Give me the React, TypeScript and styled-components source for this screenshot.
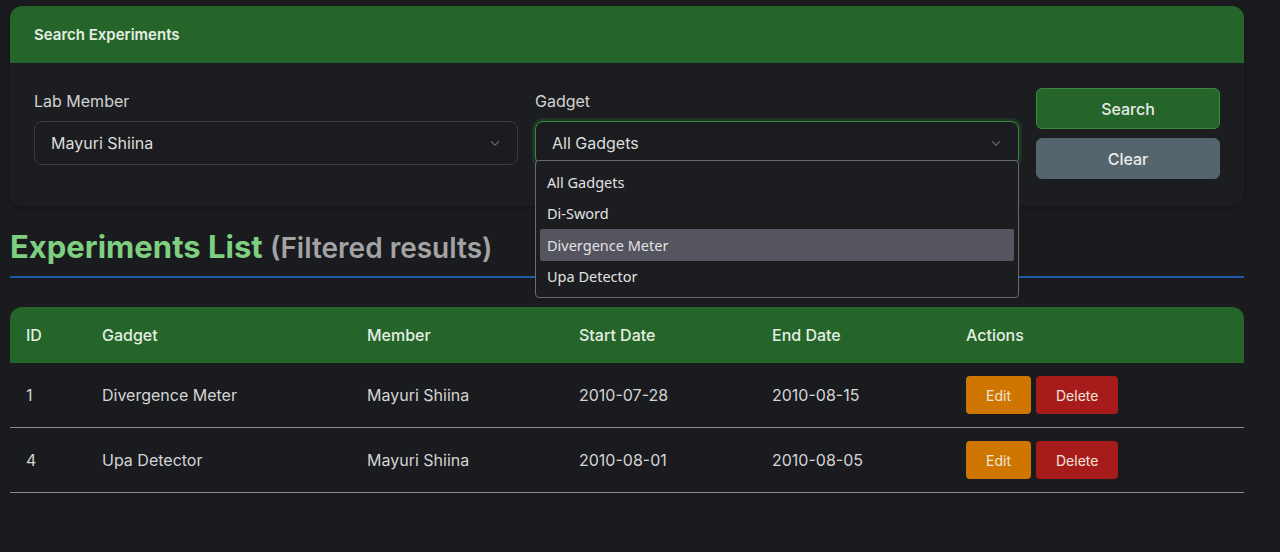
import { useState } from 'react';
import styled, { createGlobalStyle } from 'styled-components';

const GlobalStyle = createGlobalStyle`
  body {
    margin: 0;
    background: #1a1b1e;
    font-family: Inter, "Noto Sans", sans-serif;
    color: #d4d4d4;
  }
`;

const Page = styled.div`
  width: 1234px;
  padding: 6px 0 0 10px;
`;

const Card = styled.section`
  background: #1c1d20;
  border-radius: 12px;
  box-shadow: 0 2px 6px rgba(0, 0, 0, 0.25);
`;

const CardHeader = styled.div`
  height: 57px;
  display: flex;
  align-items: center;
  padding: 0 24px;
  background: #25652a;
  border-radius: 12px 12px 0 0;
  color: #e4eee3;
  font-size: 15px;
  font-weight: 600;
`;

const CardBody = styled.div`
  display: grid;
  grid-template-columns: 484px 484px 184px;
  column-gap: 17px;
  padding: 25px 24px 27px;
`;

const Field = styled.div`
  position: relative;
  display: flex;
  flex-direction: column;
`;

const Label = styled.label`
  font-size: 16px;
  line-height: 24px;
  margin: 1px 0 8px;
  color: #d2d2d2;
`;

const SelectBox = styled.div<{ $focused?: boolean }>`
  height: 44px;
  box-sizing: border-box;
  display: flex;
  align-items: center;
  justify-content: space-between;
  padding: 0 16px;
  border-radius: 8px;
  background: #1b1c1f;
  border: 1px solid ${p => (p.$focused ? '#3d8a3f' : '#3a3b3f')};
  box-shadow: ${p => (p.$focused ? '0 0 0 3px rgba(37, 101, 42, 0.35)' : 'none')};
  color: #dcdcdc;
  font-size: 16px;
`;

const Chevron = () => (
  <svg width="12" height="12" viewBox="0 0 16 16" fill="none">
    <path d="M3 6l5 5 5-5" stroke="#5f6166" strokeWidth="1.5" strokeLinecap="round" strokeLinejoin="round" />
  </svg>
);

const Menu = styled.ul`
  position: absolute;
  top: 72px;
  left: 0;
  width: 484px;
  box-sizing: border-box;
  margin: 0;
  padding: 5px 4px;
  list-style: none;
  background: #1c1d20;
  border: 1px solid #6a6b6e;
  border-radius: 4px;
  font-family: "Noto Sans", sans-serif;
  font-size: 14.5px;
  color: #e2e2e2;
  z-index: 10;
`;

const MenuItem = styled.li<{ $active?: boolean }>`
  height: 31.5px;
  display: flex;
  align-items: center;
  padding: 0 7px;
  border-radius: 2px;
  background: ${p => (p.$active ? '#55555f' : 'transparent')};
`;

const ButtonStack = styled.div`
  display: flex;
  flex-direction: column;
  gap: 9px;
`;

const FormButton = styled.button<{ $variant: 'search' | 'clear' }>`
  height: 41px;
  border-radius: 6px;
  font-family: Inter, sans-serif;
  font-size: 16px;
  font-weight: 500;
  color: #e8ece8;
  cursor: pointer;
  background: ${p => (p.$variant === 'search' ? '#25652a' : '#55656e')};
  border: 1px solid ${p => (p.$variant === 'search' ? '#3a8a3e' : '#55656e')};
`;

const Heading = styled.h2`
  margin: 21px 0 0;
  padding-bottom: 8px;
  border-bottom: 2px solid #1f5aa6;
  font-size: 31px;
  font-weight: 700;
  line-height: 40px;
  color: #7fcf80;
`;

const Sub = styled.span`
  font-size: 28px;
  color: #a3a3a3;
  font-weight: 600;
`;

const Table = styled.table`
  width: 100%;
  margin-top: 29px;
  border-collapse: separate;
  border-spacing: 0;
  font-size: 16px;
`;

const Th = styled.th`
  height: 56px;
  padding: 0 16px;
  text-align: left;
  background: #25652a;
  color: #e4eee3;
  font-weight: 500;

  &:first-child { border-top-left-radius: 12px; }
  &:last-child { border-top-right-radius: 12px; }
`;

const Td = styled.td`
  height: 64px;
  padding: 0 16px;
  color: #d4d4d4;
  border-bottom: 1px solid #8a8a8a;
`;

const Actions = styled.div`
  display: flex;
  gap: 5px;
`;

const RowButton = styled.button<{ $kind: 'edit' | 'delete' }>`
  height: 38px;
  padding: 0 20px;
  border: none;
  border-radius: 4px;
  font-family: Inter, sans-serif;
  font-size: 14px;
  color: #f1e6dc;
  cursor: pointer;
  background: ${p => (p.$kind === 'edit' ? '#cf7600' : '#a81b1b')};
`;

const gadgets = ['All Gadgets', 'Di-Sword', 'Divergence Meter', 'Upa Detector'];

const experiments = [
  { id: 1, gadget: 'Divergence Meter', member: 'Mayuri Shiina', start: '2010-07-28', end: '2010-08-15' },
  { id: 4, gadget: 'Upa Detector', member: 'Mayuri Shiina', start: '2010-08-01', end: '2010-08-05' },
];

const App = () => {
  const [hovered] = useState('Divergence Meter');

  return (
    <Page>
      <GlobalStyle />
      <Card>
        <CardHeader>Search Experiments</CardHeader>
        <CardBody>
          <Field>
            <Label>Lab Member</Label>
            <SelectBox>
              Mayuri Shiina
              <Chevron />
            </SelectBox>
          </Field>
          <Field>
            <Label>Gadget</Label>
            <SelectBox $focused>
              All Gadgets
              <Chevron />
            </SelectBox>
            <Menu>
              {gadgets.map(g => (
                <MenuItem key={g} $active={g === hovered}>{g}</MenuItem>
              ))}
            </Menu>
          </Field>
          <ButtonStack>
            <FormButton $variant="search">Search</FormButton>
            <FormButton $variant="clear">Clear</FormButton>
          </ButtonStack>
        </CardBody>
      </Card>

      <Heading>
        Experiments List <Sub>(Filtered results)</Sub>
      </Heading>

      <Table>
        <colgroup>
          <col style={{ width: 76 }} />
          <col style={{ width: 265 }} />
          <col style={{ width: 212 }} />
          <col style={{ width: 193 }} />
          <col style={{ width: 194 }} />
          <col />
        </colgroup>
        <thead>
          <tr>
            <Th>ID</Th>
            <Th>Gadget</Th>
            <Th>Member</Th>
            <Th>Start Date</Th>
            <Th>End Date</Th>
            <Th>Actions</Th>
          </tr>
        </thead>
        <tbody>
          {experiments.map(e => (
            <tr key={e.id}>
              <Td>{e.id}</Td>
              <Td>{e.gadget}</Td>
              <Td>{e.member}</Td>
              <Td>{e.start}</Td>
              <Td>{e.end}</Td>
              <Td>
                <Actions>
                  <RowButton $kind="edit">Edit</RowButton>
                  <RowButton $kind="delete">Delete</RowButton>
                </Actions>
              </Td>
            </tr>
          ))}
        </tbody>
      </Table>
    </Page>
  );
};

export default App;
